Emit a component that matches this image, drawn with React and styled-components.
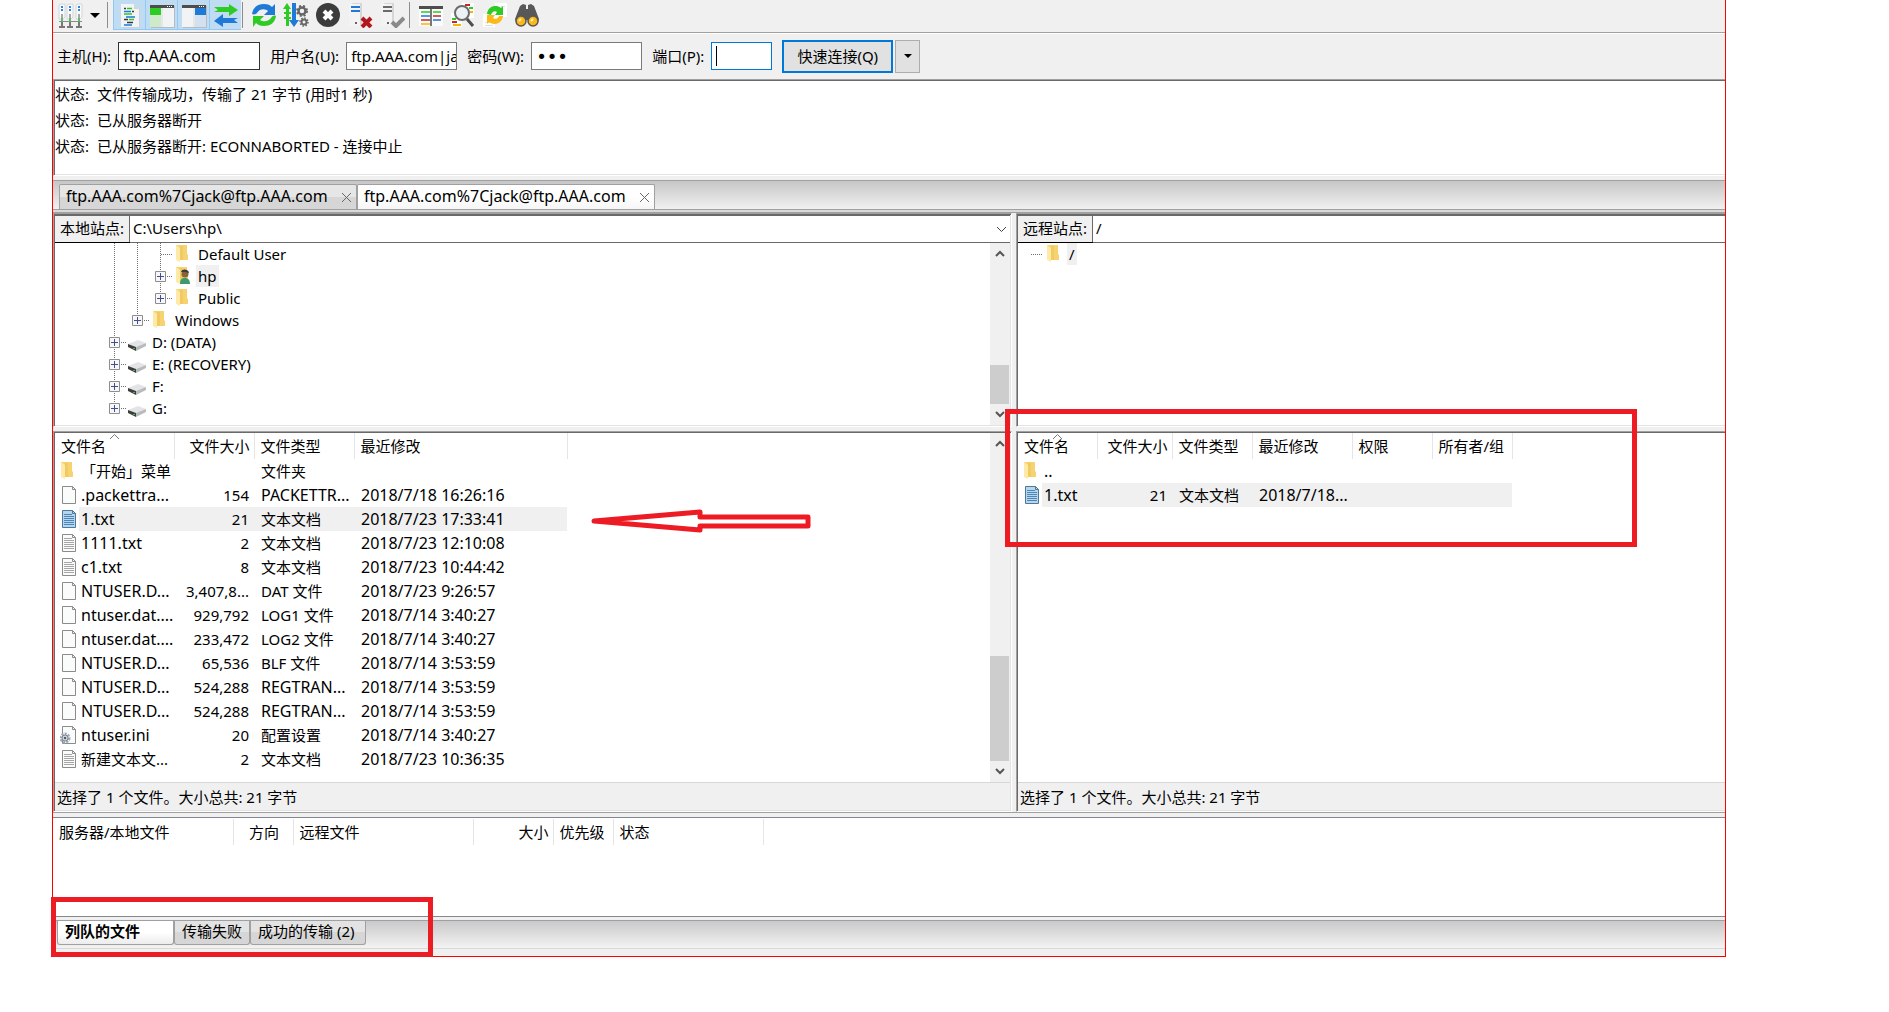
import React, { Component } from 'react';
import styled, { createGlobalStyle } from 'styled-components';

const GlobalStyle = createGlobalStyle`
  * {
    box-sizing: border-box;
  }
  body {
    margin: 0;
    background-color: white;
    color: black;
    font-family: "Noto Sans", "Noto Sans CJK SC", sans-serif;
    font-size: 15px;
    line-height: 22px;
  }
  button, input, select {
    font: inherit;
    color: inherit;
    margin: 0;
    border-radius: 0;
  }
  svg {
    display: block;
    flex: none;
  }
`;

/* ---------- toolbar icons ---------- */

const Icon = ({ children }) => (
  <svg width="26" height="26" viewBox="0 0 26 26" aria-hidden="true">{children}</svg>
);

const SitesIcon = () => (
  <Icon>
    {[1, 9, 18].map(x => (
      <g key={x}>
        <path d={`M${x} 3l2-1h4v13l-2 2h-4z`} fill="#f8f9fa" stroke="#d2d6da" />
        <path d={`M${x + 2} 5h2M${x + 2} 8h2`} stroke="#2f83d8" strokeWidth="2" />
      </g>
    ))}
    <path d="M4 12v5M12 12v5M21 12v5" stroke="#555" />
    <path d="M1 19.500h23" stroke="#8a8a8a" />
    <path d="M1 25h6M9 25h6M18 25h6M4 20v5M12 20v5M21 20v5" stroke="#777" strokeWidth="2" fill="none" />
    <path d="M3 18h2M11 18h2M20 18h2" stroke="#4fc35a" strokeWidth="3" fill="none" />
  </Icon>
);

const LogIcon = () => (
  <Icon>
    <path d="M6 3h13l4 4v19H6z" fill="#c9d2d8" />
    <path d="M4 2h13l5 5v18H4z" fill="#f1f3f5" />
    <path d="M17 2v5h5z" fill="#cfd6da" />
    <path d="M7 6.500h2M15 9.500h2M7 17.500h4M10 20.500h6" stroke="#3a3a3a" strokeWidth="1.500" />
    <path d="M10 6.500h5M7 12h8M12 17.500h5" stroke="#35c42d" strokeWidth="1.500" />
    <path d="M7 9.500h7M9 15h9M7 23h8" stroke="#1e7ad6" strokeWidth="1.500" />
  </Icon>
);

const WindowIcon = ({ right }) => (
  <Icon>
    <path d="M2 4h24v22H2z" fill="#b3bcc2" />
    <path d="M1 3h24v22H1z" fill="#f1f3f4" />
    <path d="M1 3h24v3H1z" fill="#4d4d4d" />
    <path d="M18 4.500h1M20 4.500h1M22 4.500h1" stroke="white" />
    {right
      ? <path d="M14 6h11v7H14z" fill="#1e7ad6" />
      : <path d="M1 6h11v7H1z" fill="#2fcb25" />}
    {right
      ? <path d="M14 13h11v12H14z" fill="#d3e0f0" />
      : <path d="M1 13h11v12H1z" fill="#cfeacb" />}
    <path d="M13 6v19" stroke="#dadada" />
  </Icon>
);

const QueueIcon = () => (
  <Icon>
    <path d="M1 5h15V2l9 6-9 6v-4H1l4-2z" fill="#2fcb25" />
    <path d="M25 16H10v-4l-9 7 9 6v-4h15l-4-3z" fill="#1e7ad6" />
  </Icon>
);

const RefreshIcon = () => (
  <Icon>
    <path d="M1 12C2 5 7 2 13 2c4 0 6 1 8 3l3-3v11H13l4-4c-2-2-8-3-11 2-1 1-3 2-5 1z" fill="#1e7ad6" />
    <path d="M25 14c-1 7-6 10-12 10-4 0-6-1-8-3l-3 4V14h11l-4 4c3 2 8 2 11-2 1-2 3-3 5-2z" fill="#2fcb25" />
  </Icon>
);

const ProcessIcon = () => (
  <Icon>
    <path d="M4 1l4 6H6v3h2v2H6v3h2v2H6v7H3v-7H1v-2h2v-3H1v-2h2V7H0z" fill="#2fcb25" />
    <path d="M9 1h4v17h3l-5 7-5-7h3z" fill="#1e7ad6" />
    <circle cx="19" cy="9" r="3.500" fill="none" stroke="#666" strokeWidth="2.500" />
    <circle cx="19" cy="9" r="5" fill="none" stroke="#666" strokeWidth="2" strokeDasharray="2 2" />
    <circle cx="21" cy="20" r="2.500" fill="none" stroke="#666" strokeWidth="2" />
    <circle cx="21" cy="20" r="4" fill="none" stroke="#666" strokeWidth="1.500" strokeDasharray="1.500 1.600" />
  </Icon>
);

const CancelIcon = () => (
  <Icon>
    <circle cx="13" cy="13" r="12" fill="#3c3c3c" />
    <path d="M9 9l8 8M17 9l-8 8" stroke="white" strokeWidth="4" />
  </Icon>
);

const ServerIcon = ({ online }) => (
  <Icon>
    <path d="M4 3l2-2h9v21l-2 2H4z" fill="#d6d6d6" />
    <path d="M2 2h11v22H2z" fill="#f3f3f3" />
    <path d="M4 5h9M4 9h9" stroke={online ? '#1e7ad6' : '#6a6a6a'} strokeWidth="2" />
    <circle cx="9" cy="21" r="1" fill="#333" />
    {online
      ? <path d="M15 16l9 9M24 16l-9 9" stroke="#b3161d" strokeWidth="4" />
      : <path d="M13 20l4 4 8-8" stroke="#8a8a8a" strokeWidth="4" fill="none" />}
  </Icon>
);

const FilterIcon = () => (
  <Icon>
    <path d="M1 4h24v20H1z" fill="#fbfbfb" />
    <path d="M1 4h24v3H1z" fill="#4d4d4d" />
    <path d="M3 10h9M15 10h8" stroke="#2fcb25" strokeWidth="1.500" />
    <path d="M3 14h9M15 18h8" stroke="#1e7ad6" strokeWidth="1.500" />
    <path d="M3 18h9M15 14h8" stroke="#c8242b" strokeWidth="1.500" />
    <path d="M3 22h9" stroke="#f4b400" strokeWidth="1.500" />
    <path d="M13 6v18" stroke="#4d4d4d" strokeWidth="1.500" />
  </Icon>
);

const CompareIcon = () => (
  <Icon>
    <path d="M12 1h12v15H12zM1 11h11v14H1z" fill="white" />
    <path d="M15 3h5M2 20h5" stroke="#c8242b" strokeWidth="2" />
    <path d="M19 6h4M2 17h4" stroke="#2fcb25" strokeWidth="2" />
    <path d="M20 10h3M3 23h8" stroke="#f4b400" strokeWidth="2" />
    <circle cx="12" cy="11" r="7" fill="#edf2f6" stroke="#6b6b6b" strokeWidth="2" />
    <path d="M17 17l6 7" stroke="#4d4d4d" strokeWidth="3" />
  </Icon>
);

const SyncIcon = () => (
  <Icon>
    <path d="M13 1h12v14H13zM1 12h12v13H1z" fill="white" />
    <path d="M3 20.500h6M3 23.500h8M19 4.500h4" stroke="#dedede" />
    <path d="M5 12c1-8 9-10 14-6l2-2v9h-8l2-3c-3-2-5 0-6 3z" fill="#2fcb25" />
    <path d="M21 14c-1 8-9 10-14 6l-2 2v-9h8l-2 3c3 2 5 1 6-2z" fill="#fbb817" />
  </Icon>
);

const FindIcon = () => (
  <Icon>
    <path d="M6 4l3-2 3 1v4h2V3l3-1 3 2 5 13-2 6-6 1-3-6h-2l-3 6-6-1-2-6z" fill="#585858" />
    <circle cx="7" cy="19" r="5" fill="#fbb817" stroke="#585858" strokeWidth="1.500" />
    <circle cx="19" cy="19" r="5" fill="#fbb817" stroke="#585858" strokeWidth="1.500" />
    <path d="M5 19l2-2M17 19l2-2" stroke="#fff0c0" strokeWidth="2" />
  </Icon>
);

const DropArrow = () => (
  <svg width="10" height="5" viewBox="0 0 10 5" aria-hidden="true"><path d="M0 0h10L5 5z" /></svg>
);

const SmallArrow = () => (
  <svg width="8" height="4" viewBox="0 0 8 4" aria-hidden="true"><path d="M0 0h8L4 4z" /></svg>
);

/* ---------- file and tree icons ---------- */

const FolderIcon = ({ user }) => (
  <svg width="18" height="18" viewBox="0 0 18 18" aria-hidden="true">
    <path d="M1 0h11v9l1 1v5H2z" fill="#f7d271" />
    <path d="M5 1h3v14H5z" fill="#f0cb63" />
    <path d="M1 0l4 3v14l-4-2z" fill="#ffe9a6" />
    {user && (
      <g>
        <circle cx="10" cy="7" r="3.500" fill="#8c6239" />
        <path d="M6 5c1-4 8-3 8 1l-4-1z" fill="#3b3b3b" />
        <path d="M5 17c0-5 2-6 5-6s5 2 5 6z" fill="#3c9a6e" />
      </g>
    )}
  </svg>
);

const DriveIcon = () => (
  <svg width="20" height="12" viewBox="0 0 20 12" aria-hidden="true">
    <path d="M1 5l10-4 8 3-10 4z" fill="#e4e4e6" />
    <path d="M1 5l8 3v4L1 8z" fill="#3d3d3d" />
    <path d="M9 8l10-4v3L9 12z" fill="#b9babd" />
    <path d="M6 9h2v1H6z" fill="#24d436" />
  </svg>
);

const FileIcon = ({ type, selected }) => (
  <svg width="18" height="19" viewBox="0 0 18 19" aria-hidden="true">
    <path
      d="M2.500 .5h10l3 3v14h-13z"
      fill={selected ? '#b5d6ef' : '#fafbfb'}
      stroke={selected ? '#4f7799' : '#8b8b8b'}
    />
    <path d="M12.500 .5v3h3" fill="none" stroke={selected ? '#4f7799' : '#8b8b8b'} />
    {type === 'txt' && (
      <path
        d="M4 4.500h8M4 6.500h10M4 8.500h10M4 10.500h10M4 12.500h10M4 14.500h10"
        stroke={selected ? '#4f86b3' : '#a5a5a5'}
      />
    )}
    {type === 'ini' && (
      <g>
        <circle cx="5" cy="12" r="4" fill="none" stroke="#9daab4" strokeWidth="3" strokeDasharray="2 1" />
        <circle cx="5" cy="12" r="3" fill="#c6d0d8" stroke="#7d8a94" />
        <circle cx="5" cy="12" r="1" fill="#333" />
      </g>
    )}
  </svg>
);

const Branch = ({ kind }) => (
  <svg width="23" height="22" viewBox="0 0 23 22" aria-hidden="true">
    {kind !== 'last' && <path d="M11.500 0v22" stroke="#6e6e6e" strokeDasharray="1 1" />}
    {kind === 'last' && <path d="M11.500 0v11" stroke="#6e6e6e" strokeDasharray="1 1" />}
    {kind !== 'line' && <path d="M12 11.500h11" stroke="#6e6e6e" strokeDasharray="1 1" />}
    {(kind === 'last' || kind === 'plus') && (
      <g>
        <path d="M6.500 6.500h10v10h-10z" fill="#f7f7f7" stroke="#8e8e8e" />
        <path d="M8 11.500h7M11.500 8v7" stroke="#3c5096" />
      </g>
    )}
  </svg>
);

/* ---------- data ---------- */

const messages = [
  '文件传输成功，传输了 21 字节 (用时1 秒)',
  '已从服务器断开',
  '已从服务器断开: ECONNABORTED - 连接中止',
];

const sessions = [
  { key: '1', title: 'ftp.AAA.com%7Cjack@ftp.AAA.com', active: false },
  { key: '2', title: 'ftp.AAA.com%7Cjack@ftp.AAA.com', active: true },
];

const folders = [
  { name: 'Default User', icon: 'folder', branches: ['line', 'line', 'leaf'] },
  { name: 'hp', icon: 'user', branches: ['line', 'line', 'plus'], selected: true },
  { name: 'Public', icon: 'folder', branches: ['line', 'line', 'last'] },
  { name: 'Windows', icon: 'folder', branches: ['line', 'last'] },
  { name: 'D: (DATA)', icon: 'drive', branches: ['plus'] },
  { name: 'E: (RECOVERY)', icon: 'drive', branches: ['plus'] },
  { name: 'F:', icon: 'drive', branches: ['plus'] },
  { name: 'G:', icon: 'drive', branches: ['last'] },
];

const localColumns = [
  { title: '文件名', width: 119, sorted: true },
  { title: '文件大小', width: 80, align: 'right' },
  { title: '文件类型', width: 100 },
  { title: '最近修改', width: 213 },
];

const localFiles = [
  { type: 'folder', cells: ['「开始」菜单', '', '文件夹', ''] },
  { type: 'file', cells: ['.packettra...', '154', 'PACKETTR...', '2018/7/18 16:26:16'] },
  { type: 'txt', cells: ['1.txt', '21', '文本文档', '2018/7/23 17:33:41'], selected: true },
  { type: 'txt', cells: ['1111.txt', '2', '文本文档', '2018/7/23 12:10:08'] },
  { type: 'txt', cells: ['c1.txt', '8', '文本文档', '2018/7/23 10:44:42'] },
  { type: 'file', cells: ['NTUSER.D...', '3,407,8...', 'DAT 文件', '2018/7/23 9:26:57'] },
  { type: 'file', cells: ['ntuser.dat....', '929,792', 'LOG1 文件', '2018/7/14 3:40:27'] },
  { type: 'file', cells: ['ntuser.dat....', '233,472', 'LOG2 文件', '2018/7/14 3:40:27'] },
  { type: 'file', cells: ['NTUSER.D...', '65,536', 'BLF 文件', '2018/7/14 3:53:59'] },
  { type: 'file', cells: ['NTUSER.D...', '524,288', 'REGTRAN...', '2018/7/14 3:53:59'] },
  { type: 'file', cells: ['NTUSER.D...', '524,288', 'REGTRAN...', '2018/7/14 3:53:59'] },
  { type: 'ini', cells: ['ntuser.ini', '20', '配置设置', '2018/7/14 3:40:27'] },
  { type: 'txt', cells: ['新建文本文...', '2', '文本文档', '2018/7/23 10:36:35'] },
];

const remoteColumns = [
  { title: '文件名', width: 79, sorted: true },
  { title: '文件大小', width: 75, align: 'right' },
  { title: '文件类型', width: 80 },
  { title: '最近修改', width: 100 },
  { title: '权限', width: 80 },
  { title: '所有者/组', width: 80 },
];

const remoteFiles = [
  { type: 'folder', cells: ['..', '', '', '', '', ''] },
  { type: 'txt', cells: ['1.txt', '21', '文本文档', '2018/7/18...', '', ''], selected: true },
];

const queueColumns = [
  { title: '服务器/本地文件', width: 180 },
  { title: '方向', width: 60, align: 'center' },
  { title: '远程文件', width: 180 },
  { title: '大小', width: 80, align: 'right' },
  { title: '优先级', width: 60 },
  { title: '状态', width: 150 },
];

// latin letters run a little small beside the Chinese ones
const isLatin = text => /^[\x20-\x7e]+$/.test(text);

/* ---------- layout ---------- */

const Frame = styled.main`
  margin: 0 163px 0 52px;
  border: solid #f00;
  border-width: 0 1px 1px;
  background-color: #f0f0f0;
`;

const Toolbar = styled.div`
  display: flex;
  height: 33px;
  padding-left: 2px;
  border-bottom: 1px solid #a0a0a0;
`;

const ToolButton = styled.button`
  display: flex;
  align-items: center;
  justify-content: center;
  width: ${p => (p.$narrow ? 16 : 32)}px;
  height: 30px;
  padding: 0;
  border: 0 solid #90c8f6;
  border-width: ${p => (p.$pressed ? '0 0 1px 1px' : 0)};
  background-color: ${p => (p.$pressed ? '#c0dcf3' : 'transparent')};
`;

const Separator = styled.div`
  width: 1px;
  height: 26px;
  margin: 2px ${p => (p.$tight ? '5px 0 1px' : '5px 0 4px')};
  background-color: #8d8d8d;
`;

const QuickConnect = styled.form`
  display: flex;
  align-items: center;
  height: 46px;
  padding: 0 4px 1px;
  border-top: 1px solid white;
`;

const Field = styled.input`
  width: ${p => p.$width}px;
  height: 28px;
  margin: 0 10px 0 7px;
  padding: 0 0 0 4px;
  border: 1px solid ${p => p.$border || '#7a7a7a'};
  background-color: white;
  font-size: ${p => (p.$small ? 15 : 16)}px;
  outline: none;
`;

const PasswordField = styled(Field)`
  font-family: "DejaVu Sans", sans-serif;
  font-size: 18px;
`;

const FocusedField = styled(Field)`
  background: linear-gradient(black, black) 4px 3px / 1px 20px no-repeat white;
`;

const ConnectButton = styled.button`
  width: 111px;
  height: 33px;
  padding: 0;
  border: 2px solid #0078d7;
  background-color: #e1e1e1;
`;

const HistoryButton = styled.button`
  display: flex;
  align-items: center;
  justify-content: center;
  width: 25px;
  height: 33px;
  margin-left: 2px;
  padding: 0;
  border: 1px solid #adadad;
  background-color: #e1e1e1;
`;

const Sunken = styled.div`
  border: 1px solid;
  border-color: #a0a0a0 white white #a0a0a0;
  border-right-width: ${p => (p.$cut ? 0 : 1)}px;
  padding: 1px ${p => (p.$cut ? 0 : 1)}px 1px 1px;
  background-color: white;
  box-shadow: inset 1px 1px 0 #696969, inset ${p => (p.$cut ? 0 : -1)}px -1px 0 #e3e3e3;
`;

const MessageLog = styled.div`
  min-height: 93px;
`;

const Message = styled.p`
  display: grid;
  grid-template-columns: 42px 1fr;
  margin: 0;
  line-height: 26px;
`;

const TabStrip = styled.div`
  display: flex;
  height: 30px;
  margin-top: 4px;
  padding: 3px 6px 0;
  border: solid #a0a0a0;
  border-width: 1px 0;
  background: linear-gradient(#c6c6c6, #f0f0f0);
`;

const SessionTab = styled.div`
  display: flex;
  align-items: center;
  justify-content: space-between;
  width: 298px;
  padding: 0 4px 2px 6px;
  border: 1px solid #a0a0a0;
  border-bottom: 0;
  border-radius: 2px 2px 0 0;
  background: ${p => (p.$active
    ? 'linear-gradient(white 50%, #f6f6f6)'
    : 'linear-gradient(#e6e6e6 50%, #d6d6d6 50%)')};
`;

const TabTitle = styled.button`
  padding: 0;
  border: 0;
  background: none;
  font-size: 16px;
  white-space: nowrap;
`;

const CloseButton = styled.button`
  padding: 2px 1px 0;
  border: 0;
  background: none;
`;

const Workspace = styled.div`
  display: grid;
  grid-template-columns: 959fr 709fr;
  gap: 4px;
  border-top: 1px solid #a0a0a0;
  box-shadow: 0 -2px 0 #d9d9d9;
  margin-top: 2px;
`;

const Side = styled.section`
  position: relative;
  display: flex;
  flex-direction: column;
  gap: 4px;
  min-width: 0;
`;

const SiteRow = styled.div`
  display: flex;
  height: 28px;
  border: solid #696969;
  border-width: 1px 0;
`;

const SiteLabel = styled.label`
  width: 75px;
  padding: 0 0 0 5px;
  border-right: 1px solid #696969;
  background-color: #f0f0f0;
  box-shadow: 0 1px 0 black;
  line-height: 25px;
  white-space: nowrap;
`;

const SiteSelect = styled.select`
  flex: 1;
  min-width: 0;
  padding: 0 3px 2px;
  border: 0;
  background-color: white;
  appearance: none;
  outline: none;
`;

const SelectMark = styled.svg`
  align-self: center;
  margin: 0 4px;
`;

const TreeArea = styled.div`
  display: flex;
  height: 182px;
`;

const Tree = styled.ul`
  flex: 1;
  margin: 0;
  padding: 0 0 0 ${p => p.$indent}px;
  list-style: none;
`;

const TreeRow = styled.li`
  display: flex;
  height: 22px;
`;

const TreeIcon = styled.span`
  display: flex;
  align-items: ${p => (p.$low ? 'flex-end' : 'center')};
  width: 24px;
  padding: ${p => (p.$low ? '0 0 2px 1px' : '0 0 0 3px')};
`;

const TreeLabel = styled.span`
  padding: 0 2px;
  background-color: ${p => (p.$selected ? '#f0f0f0' : 'transparent')};
`;

const ListArea = styled.div`
  position: relative;
  display: flex;
  height: 349px;
`;

const ListBody = styled.div`
  flex: 1;
`;

const Table = styled.table`
  table-layout: fixed;
  width: ${p => p.$width}px;
  border-collapse: collapse;
  white-space: nowrap;
`;

const HeadCell = styled.th`
  position: relative;
  height: 26px;
  padding: 0 4px 0 6px;
  border-right: 1px solid #e5e5e5;
  font-weight: normal;
  text-align: ${p => p.$align || 'left'};
`;

const SortMark = styled.svg`
  position: absolute;
  top: 1px;
  left: 0;
  right: 0;
  margin: 0 auto;
`;

const Cell = styled.td`
  height: 24px;
  padding: 0 5px 0 7px;
  background-color: ${p => (p.$selected ? '#f0f0f0' : 'transparent')};
  font-size: ${p => (p.$latin ? 16 : 15)}px;
  text-align: ${p => p.$align || 'left'};
`;

const NameCell = styled.td`
  height: 24px;
  padding: 0;
`;

const FileName = styled.div`
  display: flex;
  align-items: center;
  height: 24px;
  padding-left: 5px;
`;

const FileLabel = styled.span`
  flex: 1;
  margin-left: 1px;
  padding-left: 2px;
  background-color: ${p => (p.$selected ? '#f0f0f0' : 'transparent')};
  font-size: ${p => (p.$latin ? 16 : 15)}px;
  line-height: 24px;
`;

const StatusLine = styled.div`
  height: 28px;
  padding: 3px 2px 0;
  border-top: 1px solid #d7d7d7;
  background-color: #f0f0f0;
`;

const ScrollTrack = styled.div`
  display: flex;
  flex-direction: column;
  align-items: center;
  justify-content: space-between;
  width: 20px;
  background-color: #f0f0f0;
`;

const ScrollButton = styled.button`
  display: flex;
  align-items: center;
  justify-content: center;
  width: 20px;
  height: 21px;
  padding: 0;
  border: 0;
  background: none;
`;

const Thumb = styled.div`
  width: 20px;
  height: ${p => p.$size}px;
  margin-top: auto;
  border-right: 1px solid #f0f0f0;
  background-color: #cdcdcd;
`;

const QueuePane = styled.div`
  min-height: 100px;
  margin-top: 4px;
  padding-top: 1px;
  border: solid #828790;
  border-width: 1px 0;
  background-color: white;
`;

const QueueEdge = styled.div`
  border-top: 1px solid #a0a0a0;
`;

const QueueTabs = styled.div`
  position: relative;
  display: flex;
  height: 29px;
  margin: 3px 0 7px;
  padding-left: 4px;
  border: solid;
  border-width: 1px 0;
  border-color: #a0a0a0 transparent #d9d9d9;
  background: linear-gradient(#c9c9c9, #f3f3f3);
`;

const QueueTab = styled.button`
  width: ${p => p.$width}px;
  height: 24px;
  padding: 0 0 4px 7px;
  border: 1px solid #a0a0a0;
  border-top: 0;
  border-radius: 0 0 3px 3px;
  background: ${p => (p.$active
    ? 'linear-gradient(white 50%, #ececec)'
    : 'linear-gradient(#e3e3e3 50%, #d6d6d6 50%)')};
  font-weight: ${p => (p.$active ? 'bold' : 'normal')};
  line-height: 18px;
  text-align: left;
  white-space: nowrap;
`;

/* red markings laid over the window */
const RemoteMark = styled.div`
  position: absolute;
  top: 196px;
  left: -11px;
  width: 632px;
  height: 138px;
  border: 5px solid #ed1c24;
  pointer-events: none;
`;

const QueueMark = styled.div`
  position: absolute;
  top: -24px;
  left: -2px;
  width: 382px;
  height: 60px;
  border: 5px solid #ed1c24;
  pointer-events: none;
`;

const ArrowMark = styled.svg`
  position: absolute;
  top: 76px;
  left: 535px;
`;

const Scroll = ({ size }) => (
  <ScrollTrack>
    <ScrollButton type="button" aria-label="向上滚动">
      <svg width="10" height="7" viewBox="0 0 10 7"><path d="M1 6l4-4 4 4" fill="none" stroke="#555" strokeWidth="2" /></svg>
    </ScrollButton>
    <Thumb $size={size} />
    <ScrollButton type="button" aria-label="向下滚动">
      <svg width="10" height="7" viewBox="0 0 10 7"><path d="M1 1l4 4 4-4" fill="none" stroke="#555" strokeWidth="2" /></svg>
    </ScrollButton>
  </ScrollTrack>
);

const FileTable = ({ columns, files = [] }) => (
  <Table $width={columns.reduce((sum, c) => sum + c.width, 0)}>
    <colgroup>
      {columns.map(c => <col key={c.title} width={c.width} />)}
    </colgroup>
    <thead>
      <tr>
        {columns.map(c => (
          <HeadCell key={c.title} $align={c.align}>
            {c.title}
            {c.sorted && (
              <SortMark width="9" height="5" viewBox="0 0 9 5">
                <path d="M0 5l4.500-4.500L9 5" fill="none" stroke="#777" />
              </SortMark>
            )}
          </HeadCell>
        ))}
      </tr>
    </thead>
    <tbody>
      {files.map(({ type, cells: [name, ...rest], selected }, i) => (
        <tr key={i}>
          <NameCell>
            <FileName>
              {type === 'folder' ? <FolderIcon /> : <FileIcon type={type} selected={selected} />}
              <FileLabel $selected={selected} $latin={isLatin(name)}>{name}</FileLabel>
            </FileName>
          </NameCell>
          {rest.map((text, j) => (
            <Cell
              key={columns[j + 1].title}
              $align={columns[j + 1].align}
              $latin={!columns[j + 1].align && isLatin(text)}
              $selected={selected}
            >
              {text}
            </Cell>
          ))}
        </tr>
      ))}
    </tbody>
  </Table>
);

class App extends Component {
  state = {
    host: 'ftp.AAA.com',
    user: 'ftp.AAA.com|jack',
    password: '123',
    port: '',
    queue: 'queued',
  };
  handleChange = ({ target: { name, value } }) => {
    this.setState({ [name]: value });
  }
  handleSubmit = (e) => {
    e.preventDefault();
  }
  renderTreeIcon = (icon) => {
    if (icon === 'drive') {
      return <TreeIcon $low><DriveIcon /></TreeIcon>;
    }
    return <TreeIcon><FolderIcon user={icon === 'user'} /></TreeIcon>;
  }
  render() {
    const {
      host, user, password, port, queue,
    } = this.state;

    return (
      <Frame>
        <GlobalStyle />
        <Toolbar>
          <ToolButton aria-label="站点管理器"><SitesIcon /></ToolButton>
          <ToolButton $narrow aria-label="站点列表"><DropArrow /></ToolButton>
          <Separator />
          <ToolButton $pressed aria-label="消息日志"><LogIcon /></ToolButton>
          <ToolButton $pressed aria-label="本地目录树"><WindowIcon /></ToolButton>
          <ToolButton $pressed aria-label="远程目录树"><WindowIcon right /></ToolButton>
          <ToolButton $pressed aria-label="传输队列"><QueueIcon /></ToolButton>
          <Separator $tight />
          <ToolButton aria-label="刷新"><RefreshIcon /></ToolButton>
          <ToolButton aria-label="处理队列"><ProcessIcon /></ToolButton>
          <ToolButton aria-label="取消"><CancelIcon /></ToolButton>
          <ToolButton aria-label="断开"><ServerIcon online /></ToolButton>
          <ToolButton aria-label="重新连接"><ServerIcon /></ToolButton>
          <Separator $tight />
          <ToolButton aria-label="过滤"><FilterIcon /></ToolButton>
          <ToolButton aria-label="比较"><CompareIcon /></ToolButton>
          <ToolButton aria-label="同步浏览"><SyncIcon /></ToolButton>
          <ToolButton aria-label="查找"><FindIcon /></ToolButton>
        </Toolbar>

        <QuickConnect onSubmit={this.handleSubmit}>
          <label htmlFor="host">主机(H):</label>
          <Field id="host" name="host" $width={142} $border="#333" value={host} onChange={this.handleChange} />
          <label htmlFor="user">用户名(U):</label>
          <Field id="user" name="user" $small $width={111} value={user} onChange={this.handleChange} />
          <label htmlFor="password">密码(W):</label>
          <PasswordField id="password" name="password" type="password" $width={111} value={password} onChange={this.handleChange} />
          <label htmlFor="port">端口(P):</label>
          <FocusedField id="port" name="port" $width={61} $border="#0078d7" value={port} onChange={this.handleChange} />
          <ConnectButton type="submit">快速连接(Q)</ConnectButton>
          <HistoryButton type="button" aria-label="历史"><SmallArrow /></HistoryButton>
        </QuickConnect>

        <Sunken $cut>
          <MessageLog>
            {messages.map(text => (
              <Message key={text}><span>状态:</span><span>{text}</span></Message>
            ))}
          </MessageLog>
        </Sunken>

        <TabStrip>
          {sessions.map(({ key, title, active }) => (
            <SessionTab key={key} $active={active}>
              <TabTitle type="button">{title}</TabTitle>
              <CloseButton type="button" aria-label="关闭">
                <svg width="9" height="9" viewBox="0 0 9 9"><path d="M0 0l9 9M9 0L0 9" stroke="#666" /></svg>
              </CloseButton>
            </SessionTab>
          ))}
        </TabStrip>

        <Workspace>
          <Side>
            <Sunken>
              <SiteRow>
                <SiteLabel htmlFor="local">本地站点:</SiteLabel>
                <SiteSelect id="local"><option>C:\Users\hp\</option></SiteSelect>
                <SelectMark width="9" height="5" viewBox="0 0 9 5">
                  <path d="M0 0l4.500 4.500L9 0" fill="none" stroke="#444" />
                </SelectMark>
              </SiteRow>
              <TreeArea>
                <Tree $indent={48}>
                  {folders.map(({ name, icon, branches, selected }) => (
                    <TreeRow key={name}>
                      {branches.map((kind, i) => <Branch key={i} kind={kind} />)}
                      {this.renderTreeIcon(icon)}
                      <TreeLabel $selected={selected}>{name}</TreeLabel>
                    </TreeRow>
                  ))}
                </Tree>
                <Scroll size={39} />
              </TreeArea>
            </Sunken>
            <Sunken>
              <ListArea>
                <ListBody>
                  <FileTable columns={localColumns} files={localFiles} />
                </ListBody>
                <Scroll size={105} />
                <ArrowMark width="224" height="24" viewBox="0 0 224 24" aria-hidden="true">
                  <path d="M4 12L110 3v5h108v9H110v4z" fill="none" stroke="#ed1c24" strokeWidth="5" strokeLinejoin="round" />
                </ArrowMark>
              </ListArea>
              <StatusLine>选择了 1 个文件。大小总共: 21 字节</StatusLine>
            </Sunken>
          </Side>
          <Side>
            <Sunken $cut>
              <SiteRow>
                <SiteLabel htmlFor="remote">远程站点:</SiteLabel>
                <SiteSelect id="remote"><option>/</option></SiteSelect>
              </SiteRow>
              <TreeArea>
                <Tree $indent={12}>
                  <TreeRow>
                    <svg width="13" height="22" viewBox="0 0 13 22" aria-hidden="true">
                      <path d="M1 11.500h12" stroke="#6e6e6e" strokeDasharray="1 1" />
                    </svg>
                    <TreeIcon><FolderIcon /></TreeIcon>
                    <TreeLabel $selected>/</TreeLabel>
                  </TreeRow>
                </Tree>
              </TreeArea>
            </Sunken>
            <Sunken $cut>
              <ListArea>
                <ListBody>
                  <FileTable columns={remoteColumns} files={remoteFiles} />
                </ListBody>
              </ListArea>
              <StatusLine>选择了 1 个文件。大小总共: 21 字节</StatusLine>
            </Sunken>
            <RemoteMark />
          </Side>
        </Workspace>

        <QueueEdge>
          <QueuePane>
            <FileTable columns={queueColumns} />
          </QueuePane>
        </QueueEdge>
        <QueueTabs>
          <QueueTab type="button" $width={117} $active={queue === 'queued'} onClick={() => this.setState({ queue: 'queued' })}>列队的文件</QueueTab>
          <QueueTab type="button" $width={76} $active={queue === 'failed'} onClick={() => this.setState({ queue: 'failed' })}>传输失败</QueueTab>
          <QueueTab type="button" $width={116} $active={queue === 'done'} onClick={() => this.setState({ queue: 'done' })}>成功的传输 (2)</QueueTab>
          <QueueMark />
        </QueueTabs>
      </Frame>
    );
  }
}

export default App;
